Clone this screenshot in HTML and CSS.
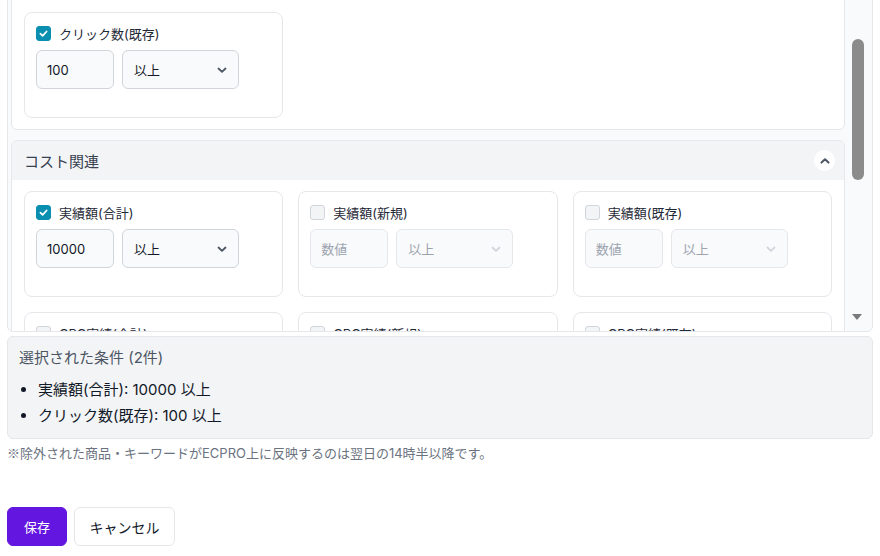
FILE: index.html
```html
<!DOCTYPE html>
<html lang="ja">
<head>
<meta charset="utf-8">
<title>条件設定</title>
<link rel="stylesheet" href="styles.css">
</head>
<body>
<div class="page">
  <div class="scroll-box">
    <div class="scroller" id="scroller">
      <section class="group">
        <div class="group-head"><span>パフォーマンス関連</span><span class="toggle"><svg width="12" height="12" viewBox="0 0 12 12"><polyline points="2.5,7.6 6,4.3 9.5,7.6" fill="none" stroke="#4b5563" stroke-width="2" stroke-linecap="round" stroke-linejoin="round"/></svg></span></div>
        <div class="group-body">
          <div class="card"><div class="check-row"><span class="cb"></span><span class="lbl">表示回数(合計)</span></div><div class="fields"><div class="num off">数値</div><div class="sel off"><span>以上</span><svg width="12" height="12" viewBox="0 0 12 12"><polyline points="2.5,4.5 6,7.8 9.5,4.5" fill="none" stroke="#d1d5db" stroke-width="1.8" stroke-linecap="round" stroke-linejoin="round"/></svg></div></div></div>
          <div class="card"><div class="check-row"><span class="cb"></span><span class="lbl">表示回数(新規)</span></div><div class="fields"><div class="num off">数値</div><div class="sel off"><span>以上</span><svg width="12" height="12" viewBox="0 0 12 12"><polyline points="2.5,4.5 6,7.8 9.5,4.5" fill="none" stroke="#d1d5db" stroke-width="1.8" stroke-linecap="round" stroke-linejoin="round"/></svg></div></div></div>
          <div class="card"><div class="check-row"><span class="cb"></span><span class="lbl">表示回数(既存)</span></div><div class="fields"><div class="num off">数値</div><div class="sel off"><span>以上</span><svg width="12" height="12" viewBox="0 0 12 12"><polyline points="2.5,4.5 6,7.8 9.5,4.5" fill="none" stroke="#d1d5db" stroke-width="1.8" stroke-linecap="round" stroke-linejoin="round"/></svg></div></div></div>
          <div class="card"><div class="check-row"><span class="cb"></span><span class="lbl">クリック数(合計)</span></div><div class="fields"><div class="num off">数値</div><div class="sel off"><span>以上</span><svg width="12" height="12" viewBox="0 0 12 12"><polyline points="2.5,4.5 6,7.8 9.5,4.5" fill="none" stroke="#d1d5db" stroke-width="1.8" stroke-linecap="round" stroke-linejoin="round"/></svg></div></div></div>
          <div class="card"><div class="check-row"><span class="cb"></span><span class="lbl">クリック数(新規)</span></div><div class="fields"><div class="num off">数値</div><div class="sel off"><span>以上</span><svg width="12" height="12" viewBox="0 0 12 12"><polyline points="2.5,4.5 6,7.8 9.5,4.5" fill="none" stroke="#d1d5db" stroke-width="1.8" stroke-linecap="round" stroke-linejoin="round"/></svg></div></div></div>
          <div class="card"><div class="check-row"><span class="cb"></span><span class="lbl">CTR(合計)</span></div><div class="fields"><div class="num off">数値</div><div class="sel off"><span>以上</span><svg width="12" height="12" viewBox="0 0 12 12"><polyline points="2.5,4.5 6,7.8 9.5,4.5" fill="none" stroke="#d1d5db" stroke-width="1.8" stroke-linecap="round" stroke-linejoin="round"/></svg></div></div></div>
          <div class="card"><div class="check-row"><span class="cb on"><svg width="11" height="11" viewBox="0 0 12 12"><polyline points="2.6,6.2 5,8.5 9.4,3.8" fill="none" stroke="#fff" stroke-width="1.9" stroke-linecap="round" stroke-linejoin="round"/></svg></span><span class="lbl">クリック数(既存)</span></div><div class="fields"><div class="num">100</div><div class="sel"><span>以上</span><svg width="12" height="12" viewBox="0 0 12 12"><polyline points="2.5,4.5 6,7.8 9.5,4.5" fill="none" stroke="#4b5563" stroke-width="1.8" stroke-linecap="round" stroke-linejoin="round"/></svg></div></div></div>
        </div>
      </section>

      <section class="group">
        <div class="group-head" id="cost-header"><span>コスト関連</span><span class="toggle"><svg width="12" height="12" viewBox="0 0 12 12"><polyline points="2.5,7.6 6,4.3 9.5,7.6" fill="none" stroke="#4b5563" stroke-width="2" stroke-linecap="round" stroke-linejoin="round"/></svg></span></div>
        <div class="group-body">
          <div class="card"><div class="check-row"><span class="cb on"><svg width="11" height="11" viewBox="0 0 12 12"><polyline points="2.6,6.2 5,8.5 9.4,3.8" fill="none" stroke="#fff" stroke-width="1.9" stroke-linecap="round" stroke-linejoin="round"/></svg></span><span class="lbl">実績額(合計)</span></div><div class="fields"><div class="num">10000</div><div class="sel"><span>以上</span><svg width="12" height="12" viewBox="0 0 12 12"><polyline points="2.5,4.5 6,7.8 9.5,4.5" fill="none" stroke="#4b5563" stroke-width="1.8" stroke-linecap="round" stroke-linejoin="round"/></svg></div></div></div>
          <div class="card"><div class="check-row"><span class="cb"></span><span class="lbl">実績額(新規)</span></div><div class="fields"><div class="num off">数値</div><div class="sel off"><span>以上</span><svg width="12" height="12" viewBox="0 0 12 12"><polyline points="2.5,4.5 6,7.8 9.5,4.5" fill="none" stroke="#d1d5db" stroke-width="1.8" stroke-linecap="round" stroke-linejoin="round"/></svg></div></div></div>
          <div class="card"><div class="check-row"><span class="cb"></span><span class="lbl">実績額(既存)</span></div><div class="fields"><div class="num off">数値</div><div class="sel off"><span>以上</span><svg width="12" height="12" viewBox="0 0 12 12"><polyline points="2.5,4.5 6,7.8 9.5,4.5" fill="none" stroke="#d1d5db" stroke-width="1.8" stroke-linecap="round" stroke-linejoin="round"/></svg></div></div></div>
          <div class="card"><div class="check-row"><span class="cb"></span><span class="lbl">CPC実績(合計)</span></div><div class="fields"><div class="num off">数値</div><div class="sel off"><span>以上</span><svg width="12" height="12" viewBox="0 0 12 12"><polyline points="2.5,4.5 6,7.8 9.5,4.5" fill="none" stroke="#d1d5db" stroke-width="1.8" stroke-linecap="round" stroke-linejoin="round"/></svg></div></div></div>
          <div class="card"><div class="check-row"><span class="cb"></span><span class="lbl">CPC実績(新規)</span></div><div class="fields"><div class="num off">数値</div><div class="sel off"><span>以上</span><svg width="12" height="12" viewBox="0 0 12 12"><polyline points="2.5,4.5 6,7.8 9.5,4.5" fill="none" stroke="#d1d5db" stroke-width="1.8" stroke-linecap="round" stroke-linejoin="round"/></svg></div></div></div>
          <div class="card"><div class="check-row"><span class="cb"></span><span class="lbl">CPC実績(既存)</span></div><div class="fields"><div class="num off">数値</div><div class="sel off"><span>以上</span><svg width="12" height="12" viewBox="0 0 12 12"><polyline points="2.5,4.5 6,7.8 9.5,4.5" fill="none" stroke="#d1d5db" stroke-width="1.8" stroke-linecap="round" stroke-linejoin="round"/></svg></div></div></div>
        </div>
      </section>

      <section class="group">
        <div class="group-head"><span>コンバージョン関連</span><span class="toggle"><svg width="12" height="12" viewBox="0 0 12 12"><polyline points="2.5,7.6 6,4.3 9.5,7.6" fill="none" stroke="#4b5563" stroke-width="2" stroke-linecap="round" stroke-linejoin="round"/></svg></span></div>
        <div class="group-body">
          <div class="card"><div class="check-row"><span class="cb"></span><span class="lbl">ROAS(合計)</span></div><div class="fields"><div class="num off">数値</div><div class="sel off"><span>以上</span><svg width="12" height="12" viewBox="0 0 12 12"><polyline points="2.5,4.5 6,7.8 9.5,4.5" fill="none" stroke="#d1d5db" stroke-width="1.8" stroke-linecap="round" stroke-linejoin="round"/></svg></div></div></div>
          <div class="card"><div class="check-row"><span class="cb"></span><span class="lbl">ROAS(新規)</span></div><div class="fields"><div class="num off">数値</div><div class="sel off"><span>以上</span><svg width="12" height="12" viewBox="0 0 12 12"><polyline points="2.5,4.5 6,7.8 9.5,4.5" fill="none" stroke="#d1d5db" stroke-width="1.8" stroke-linecap="round" stroke-linejoin="round"/></svg></div></div></div>
          <div class="card"><div class="check-row"><span class="cb"></span><span class="lbl">ROAS(既存)</span></div><div class="fields"><div class="num off">数値</div><div class="sel off"><span>以上</span><svg width="12" height="12" viewBox="0 0 12 12"><polyline points="2.5,4.5 6,7.8 9.5,4.5" fill="none" stroke="#d1d5db" stroke-width="1.8" stroke-linecap="round" stroke-linejoin="round"/></svg></div></div></div>
        </div>
      </section>
    </div>
    <div class="vbar" aria-hidden="true">
      <div class="vbar-thumb"></div>
      <div class="vbar-arrow"></div>
    </div>
  </div>

  <div class="summary">
    <div class="summary-title">選択された条件 (2件)</div>
    <ul class="summary-list">
      <li>実績額(合計): 10000 以上</li>
      <li>クリック数(既存): 100 以上</li>
    </ul>
  </div>

  <p class="note"><span class="mark">※</span>除外された商品・キーワードがECPRO上に反映するのは翌日の14時半以降です。</p>

  <div class="actions">
    <button class="btn btn-primary" type="button">保存</button>
    <button class="btn btn-secondary" type="button">キャンセル</button>
  </div>
</div>
<script src="script.js"></script>
</body>
</html>
```

FILE: styles.css
```css
html {
  overflow: hidden;
}
body {
  margin: 0;
  background: #ffffff;
  font-family: Inter, "Noto Sans CJK JP", "Noto Sans", sans-serif;
  color: #1f2937;
}
.page {
  padding: 0 7px 10px 7px;
}
.scroll-box {
  position: relative;
  height: 400px;
  border: 1px solid #e5e7eb;
  border-radius: 6px;
  background: #f9fafb;
  box-sizing: border-box;
}
.scroller {
  height: 100%;
  overflow: hidden;
  padding: 0 27px 0 3px;
  box-sizing: border-box;
  display: flex;
  flex-direction: column;
  gap: 10px;
}
.vbar {
  position: absolute;
  top: 0;
  right: 0;
  bottom: 0;
  width: 24px;
}
.vbar-thumb {
  position: absolute;
  right: 8px;
  bottom: 151px;
  width: 12px;
  height: 141px;
  border-radius: 6px;
  background: #8b8b8b;
}
.vbar-arrow {
  position: absolute;
  right: 10px;
  bottom: 11px;
  width: 0;
  height: 0;
  border-left: 5px solid transparent;
  border-right: 5px solid transparent;
  border-top: 6px solid #7a7a7a;
}
.group {
  flex: none;
  background: #ffffff;
  border: 1px solid #e5e7eb;
  border-radius: 6px;
  overflow: hidden;
}
.group-head {
  height: 39px;
  background: #f3f4f6;
  display: flex;
  align-items: center;
  justify-content: space-between;
  padding: 0 9px 0 12px;
  font-size: 15px;
  color: #374151;
}
.toggle {
  width: 21px;
  height: 21px;
  border-radius: 50%;
  background: #ffffff;
  display: flex;
  align-items: center;
  justify-content: center;
}
.group-body {
  display: grid;
  grid-template-columns: repeat(3, 1fr);
  gap: 15px;
  padding: 11px 12px 11px 12px;
}
.card {
  border: 1px solid #e5e7eb;
  border-radius: 8px;
  padding: 12px 12px 28px 11px;
  display: flex;
  flex-direction: column;
  gap: 9px;
}
.check-row {
  display: flex;
  align-items: center;
  gap: 8px;
  height: 16px;
}
.cb {
  width: 15px;
  height: 15px;
  box-sizing: border-box;
  border: 1px solid #d1d5db;
  border-radius: 3px;
  background: #f3f4f6;
  display: flex;
  align-items: center;
  justify-content: center;
}
.cb.on {
  background: #0a8fb0;
  border-color: #0a8fb0;
}
.lbl {
  font-size: 13px;
  color: #1f2937;
}
.fields {
  display: flex;
  gap: 8px;
}
.num, .sel {
  height: 39px;
  box-sizing: border-box;
  border: 1px solid #d1d5db;
  border-radius: 6px;
  background: #f9fafb;
  font-size: 13px;
  color: #111827;
  display: flex;
  align-items: center;
}
.num {
  width: 78px;
  padding-left: 10px;
}
.sel {
  width: 117px;
  padding: 0 10px 0 11px;
  justify-content: space-between;
}
.num.off, .sel.off {
  border-color: #e5e7eb;
  color: #9ca3af;
}
.summary {
  margin-top: 4px;
  background: #f3f4f6;
  border: 1px solid #e5e7eb;
  border-radius: 6px;
  padding: 11px 11px 9px 11px;
}
.summary-title {
  font-size: 15px;
  color: #4b5563;
  line-height: 20px;
}
.summary-list {
  margin: 9px 0 0 0;
  padding-left: 19px;
  font-size: 15px;
  color: #111827;
  line-height: 26px;
}
.note {
  margin: 5px 0 0 0;
  font-size: 13px;
  color: #6b7280;
  line-height: 17px;
}
.mark {
  font-family: "Noto Sans CJK JP", sans-serif;
}
.actions {
  margin-top: 45px;
  display: flex;
  gap: 7px;
}
.btn {
  height: 39px;
  border-radius: 6px;
  font-family: inherit;
  cursor: pointer;
}
.btn-primary {
  width: 60px;
  background: #6416e1;
  border: 1px solid #6416e1;
  color: #ffffff;
  font-size: 13px;
}
.btn-secondary {
  width: 101px;
  background: #ffffff;
  border: 1px solid #e5e7eb;
  color: #111827;
  font-size: 14px;
}
```

FILE: script.js
```js
document.scrollingElement.scrollTop = 100000;
var scroller = document.getElementById('scroller');
var head = document.getElementById('cost-header');
var delta = head.getBoundingClientRect().top - 141;
scroller.scrollTop += delta;
```
